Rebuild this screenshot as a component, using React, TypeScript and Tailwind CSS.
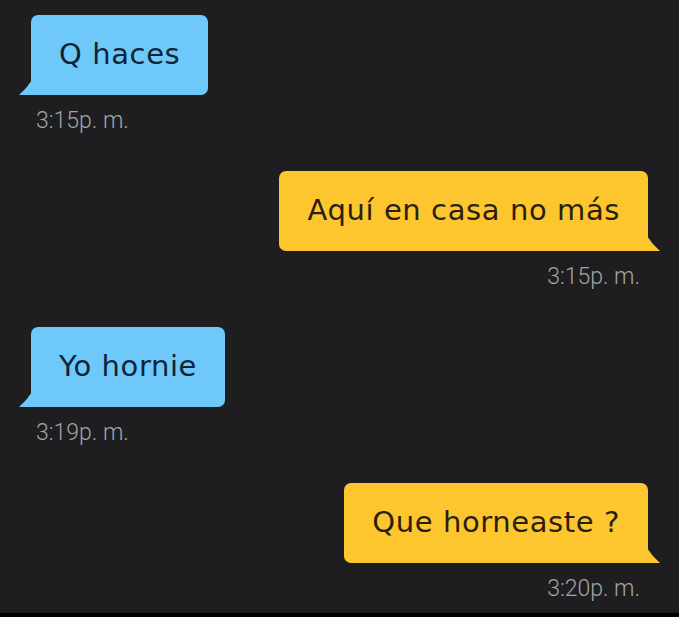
const messages = [
  { side: 'left', text: 'Q haces', time: '3:15p. m.' },
  { side: 'right', text: 'Aquí en casa no más', time: '3:15p. m.' },
  { side: 'left', text: 'Yo hornie', time: '3:19p. m.' },
  { side: 'right', text: 'Que horneaste ?', time: '3:20p. m.' },
];

function Bubble({ side, text }: { side: string; text: string }) {
  const left = side === 'left';
  return (
    <div
      className={`relative h-[80px] flex items-center px-[28px] rounded-[7px] text-[29px] tracking-[0.6px] ${
        left ? 'bg-[#6ec9fa] rounded-bl-none text-[#0f2436]' : 'bg-[#fdc62e] rounded-br-none text-[#2a1f0e]'
      }`}
      style={{ fontFamily: '"DejaVu Sans", sans-serif' }}
    >
      {text}
      {left ? (
        <svg className="absolute left-[-12px] bottom-0" width="13" height="15" viewBox="0 0 13 15">
          <path d="M13 0 Q8 8 0 15 L13 15 Z" fill="#6ec9fa" />
        </svg>
      ) : (
        <svg className="absolute right-[-12px] bottom-0" width="13" height="15" viewBox="0 0 13 15">
          <path d="M0 0 Q5 8 13 15 L0 15 Z" fill="#fdc62e" />
        </svg>
      )}
    </div>
  );
}

export default function App() {
  return (
    <div
      className="w-[679px] h-[617px] bg-[#1e1e20] border-b-4 border-black flex flex-col pt-[15px] px-[31px] gap-[38px]"
      style={{ fontFamily: 'Roboto, "Liberation Sans", sans-serif' }}
    >
      {messages.map((m, i) => (
        <div key={i} className={`flex flex-col ${m.side === 'left' ? 'items-start' : 'items-end'}`}>
          <Bubble side={m.side} text={m.text} />
          <div
            className={`mt-[14px] text-[23px] leading-[24px] font-light text-[#a3a3a6] ${
              m.side === 'left' ? 'pl-[5px]' : 'pr-[8px]'
            }`}
          >
            {m.time}
          </div>
        </div>
      ))}
    </div>
  );
}
